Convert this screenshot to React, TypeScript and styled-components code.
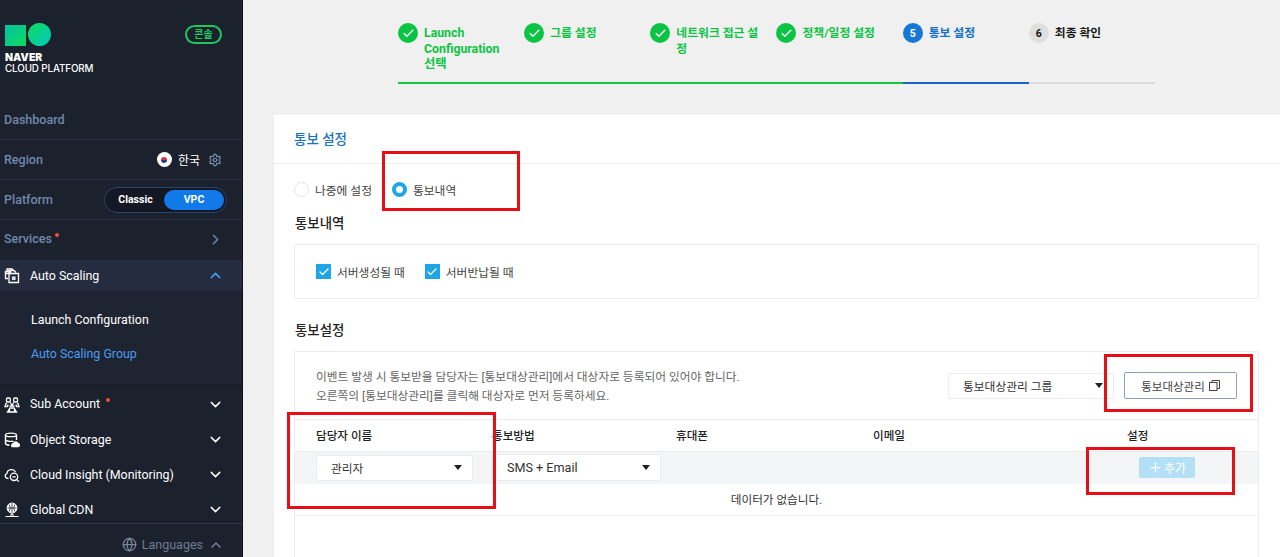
import React from "react";
import styled, { createGlobalStyle } from "styled-components";
import { Check, ChevronDown, ChevronRight, ChevronUp, Globe, Plus, Settings } from "lucide-react";

const Global = createGlobalStyle`
  html, body { margin: 0; padding: 0; height: 557px; overflow: hidden; }
  body { font-family: Roboto, "Noto Sans CJK KR", sans-serif; background: #f0f0f0; }
  * { box-sizing: border-box; }
`;

const Page = styled.div`
  display: flex;
  height: 557px;
  position: relative;
  overflow: hidden;
`;

/* sidebar */
const Side = styled.aside`
  width: 243px;
  flex: none;
  background: #1c212e;
  border-right: 1px solid #0e1118;
  display: flex;
  flex-direction: column;
`;
const LogoArea = styled.div`
  height: 100px;
  padding: 23px 20px 0 5px;
  display: flex;
  justify-content: space-between;
  align-items: flex-start;
`;
const LogoMark = styled.div`
  display: flex;
  align-items: flex-end;
  gap: 2px;
`;
const LogoSquare = styled.div`
  width: 21px;
  height: 21px;
  background: linear-gradient(135deg, #00c3a5, #10d95c);
`;
const LogoCircle = styled.div`
  width: 23px;
  height: 23px;
  border-radius: 50%;
  background: linear-gradient(135deg, #10d95c, #00c8c0);
`;
const LogoText = styled.div`
  margin-top: 6px;
  color: #fff;
  font-family: Inter, sans-serif;
  font-size: 9.8px;
  line-height: 11px;
  font-weight: 500;
  letter-spacing: -0.1px;
  b { font-weight: 900; display: block; font-size: 10.4px; letter-spacing: 0.1px; }
`;
const Badge = styled.div`
  width: 37px;
  height: 19px;
  margin: 2px 0 0;
  border: 2px solid #1fc75c;
  border-radius: 10px;
  color: #1fd060;
  font-size: 10px;
  font-weight: 700;
  line-height: 15px;
  text-align: center;
`;
const TopRow = styled.div<{ $last?: boolean }>`
  height: ${(p) => (p.$last ? "39px" : "40px")};
  padding: 0 20px 0 4px;
  display: flex;
  align-items: center;
  justify-content: space-between;
  color: #7189ab;
  font-size: 12.5px;
  font-weight: 500;
  border-bottom: ${(p) => (p.$last ? "none" : "1px solid #2a3242")};
  > svg { margin-right: -2px; }
`;
const RegionValue = styled.div`
  display: flex;
  align-items: center;
  gap: 6px;
  color: #fff;
  font-size: 12px;
  font-weight: 400;
  svg { margin-left: 2px; color: #7f94b0; }
`;
const Flag = styled.span`
  width: 15px;
  height: 15px;
  border-radius: 50%;
  background: #fff;
  display: flex;
  align-items: center;
  justify-content: center;
  &::after {
    content: "";
    width: 6px;
    height: 6px;
    border-radius: 50%;
    background: linear-gradient(180deg, #d8344a 50%, #24408e 50%);
  }
`;
const PlatformSwitch = styled.div`
  width: 123px;
  height: 26px;
  margin-right: -5px;
  padding: 2px;
  border: 1px solid #2b4468;
  border-radius: 13px;
  background: #141824;
  display: flex;
  align-items: center;
`;
const PlatformOption = styled.span<{ $on?: boolean }>`
  flex: ${(p) => (p.$on ? "0 0 60px" : "1")};
  height: 20px;
  border-radius: 10px;
  background: ${(p) => (p.$on ? "#117ae8" : "transparent")};
  color: #fff;
  font-size: 10.5px;
  font-weight: 700;
  line-height: 20px;
  text-align: center;
`;
const Dot = styled.i<{ $gap: number }>`
  display: inline-block;
  width: 4px;
  height: 4px;
  margin: 0 0 11px ${(p) => p.$gap}px;
  border-radius: 50%;
  background: #f0503c;
  vertical-align: middle;
`;
const ActiveRow = styled.div`
  height: 31px;
  margin-top: 1px;
  padding: 0 18px 0 4px;
  background: #262c3f;
  display: flex;
  align-items: center;
  justify-content: space-between;
  color: #fff;
  font-size: 12.4px;
`;
const MenuLabel = styled.span`
  display: flex;
  align-items: center;
  gap: 10px;
  svg { flex: none; }
`;
const SubPanel = styled.div`
  height: 94px;
  padding: 13px 0 0 31px;
  background: #1f2432;
  border-bottom: 1px solid #1a1e29;
`;
const SubItem = styled.div<{ $on?: boolean }>`
  height: 34px;
  line-height: 32px;
  color: ${(p) => (p.$on ? "#4a9df0" : "#fff")};
  font-size: 12.4px;
`;
const MenuList = styled.div`
  padding-top: 2px;
  height: 139px;
  border-bottom: 1px solid #333a49;
`;
const MenuRow = styled.div`
  height: 35px;
  padding: 0 18px 0 4px;
  display: flex;
  align-items: center;
  justify-content: space-between;
  color: #fff;
  font-size: 12.4px;
`;
const LangRow = styled.div`
  flex: 1;
  padding: 8px 18px 0 0;
  display: flex;
  align-items: center;
  justify-content: flex-end;
  gap: 5px;
  color: #6e7d92;
  font-size: 12.5px;
  svg { color: #7a8698; }
`;

/* main */
const Main = styled.main`
  flex: 1;
  min-width: 0;
  padding-left: 31px;
`;
const Steps = styled.div`
  width: 757px;
  height: 84px;
  margin-left: 124px;
  padding-top: 23px;
  display: grid;
  grid-template-columns: repeat(6, 1fr);
  position: relative;
`;
const StepTrack = styled.div<{ $state: string }>`
  position: relative;
  display: flex;
  gap: 6px;
  padding-right: 16px;
  height: 61px;
  border-bottom: 2px solid ${(p) => (p.$state === "done" ? "#12c73a" : p.$state === "now" ? "#1566c9" : "#dcdcdc")};
`;
const StepDot = styled.div<{ $state: string }>`
  width: 20px;
  height: 20px;
  flex: none;
  border-radius: 50%;
  background: ${(p) => (p.$state === "done" ? "#0cc443" : p.$state === "now" ? "#1678d4" : "#dedede")};
  color: ${(p) => (p.$state === "todo" ? "#111" : "#fff")};
  font-size: 10.5px;
  font-weight: 700;
  display: flex;
  align-items: center;
  justify-content: center;
`;
const StepText = styled.div<{ $state: string; $latin?: boolean }>`
  font-size: ${(p) => (p.$latin ? "12.3px" : "11.8px")};
  font-weight: 700;
  line-height: 15.5px;
  padding-top: 3px;
  color: ${(p) => (p.$state === "done" ? "#0cc443" : p.$state === "now" ? "#1672c4" : "#1a1a1a")};
`;
const Card = styled.section`
  margin-top: 31px;
  background: #fff;
  height: 500px;
`;
const CardHead = styled.h2`
  margin: 0;
  height: 49px;
  padding-left: 20px;
  border-bottom: 1px solid #eeeeee;
  color: #1672c4;
  font-size: 13.5px;
  font-weight: 500;
  line-height: 49px;
`;
const CardBody = styled.div`
  padding: 0 21px 0 20px;
`;
const RadioRow = styled.div`
  height: 50px;
  display: flex;
  align-items: center;
  gap: 20px;
`;
const RadioItem = styled.label`
  display: flex;
  align-items: center;
  gap: 6px;
  color: #444;
  font-size: 11.75px;
`;
const RadioMark = styled.span<{ $on?: boolean }>`
  width: 15px;
  height: 15px;
  border-radius: 50%;
  background: #fff;
  border: ${(p) => (p.$on ? "4px solid #1ea5e6" : "1px solid #e3e3e3")};
`;
const SectionTitle = styled.h3`
  margin: 0;
  height: 30px;
  padding-left: 1px;
  color: #222;
  font-size: 13.4px;
  font-weight: 500;
  line-height: 19px;
`;
const Box = styled.div`
  border: 1px solid #ececec;
  border-radius: 2px;
`;
const CheckBox = styled(Box)`
  height: 55px;
  padding: 0 21px;
  display: flex;
  align-items: center;
  gap: 20px;
  margin-bottom: 22px;
`;
const CheckItem = styled.label`
  display: flex;
  align-items: center;
  gap: 6px;
  color: #444;
  font-size: 11.75px;
`;
const CheckMark = styled.span`
  width: 15px;
  height: 15px;
  background: #1ea5e6;
  color: #fff;
  display: flex;
  align-items: center;
  justify-content: center;
`;
const NoticeBox = styled(Box)`
  height: 300px;
`;
const NoticeTop = styled.div`
  height: 68px;
  padding: 0 21px;
  display: flex;
  align-items: center;
  justify-content: space-between;
  border-bottom: 1px solid #ececec;
`;
const NoticeText = styled.p`
  margin: 0;
  padding-top: 2px;
  color: #666;
  font-size: 11.72px;
  line-height: 19px;
`;
const NoticeActions = styled.div`
  display: flex;
  align-items: center;
  gap: 10px;
`;
const Select = styled.div<{ $w: number; $h: number; $latin?: boolean }>`
  width: ${(p) => p.$w}px;
  height: ${(p) => p.$h}px;
  padding: 0 10px 0 14px;
  background: #fff;
  border: 1px solid #ececec;
  border-radius: 2px;
  display: flex;
  align-items: center;
  justify-content: space-between;
  color: #333;
  font-size: ${(p) => (p.$latin ? "12.6px" : "11.75px")};
  &::after {
    content: "";
    border-left: 4px solid transparent;
    border-right: 4px solid transparent;
    border-top: 5px solid #222;
  }
`;
const ManageButton = styled.button`
  width: 113px;
  height: 27px;
  padding: 0;
  background: #fff;
  border: 1px solid #8ea2bd;
  border-radius: 2px;
  color: #444;
  font: inherit;
  font-size: 11.5px;
  display: flex;
  align-items: center;
  justify-content: center;
  gap: 4px;
`;
const Cols = styled.div`
  display: grid;
  grid-template-columns: 176px 184px 197px 254px 1fr;
  padding-left: 21px;
`;
const HeadRow = styled(Cols)`
  height: 32px;
  padding-bottom: 2px;
  align-items: center;
  border-bottom: 1px solid #ececec;
  color: #222;
  font-size: 11.6px;
  font-weight: 500;
`;
const BodyRow = styled(Cols)`
  height: 32px;
  padding-bottom: 1px;
  align-items: center;
  background: #f4f5f7;
`;
const AddButton = styled.button`
  width: 56px;
  height: 21px;
  padding: 0;
  margin-left: 12px;
  background: #b3e0f5;
  border: none;
  border-radius: 2px;
  color: #fff;
  font: inherit;
  font-size: 12px;
  display: flex;
  align-items: center;
  justify-content: center;
  gap: 1px;
`;
const Empty = styled.div`
  height: 32px;
  border-bottom: 1px solid #f2f2f2;
  color: #333;
  font-size: 11.6px;
  line-height: 32px;
  text-align: center;
`;

/* red marks drawn over the screenshot */
const Mark = styled.div<{ $x: number; $y: number; $w: number; $h: number }>`
  position: absolute;
  left: ${(p) => p.$x}px;
  top: ${(p) => p.$y}px;
  width: ${(p) => p.$w}px;
  height: ${(p) => p.$h}px;
  border: 3px solid #e60f18;
  pointer-events: none;
`;

const CubeIcon = () => (
  <svg width="16" height="16" viewBox="0 0 16 16" fill="none" stroke="#fff" strokeWidth="1.3">
    <path d="M3 3.500V1h5l1.500 1.500" />
    <path d="M5 5V2.500h5l2 2" />
    <path d="M1.500 3.500h5v2h-5z" />
    <path d="M1.500 3.500v7H4M6.500 5.500H14.500V14.500H5V5.500z" />
    <path d="M7.500 8h4.500v4.500H7.500z" fill="#d8e4f5" stroke="#1c212e" strokeWidth=".8" />
  </svg>
);
const PeopleIcon = () => (
  <svg width="16" height="16" viewBox="0 0 16 16" fill="none" stroke="#fff" strokeWidth="1.300">
    <rect x="2.500" y="1" width="3.800" height="4" rx="1" />
    <rect x="9.700" y="1" width="3.800" height="4" rx="1" />
    <path d="M6.300 5.500L8 8.500l1.700-3" />
    <path d="M2.500 5.500L1 9.500h2.500L4 7.500" />
    <path d="M13.500 5.500L15 9.500h-2.500L12 7.500" />
    <path d="M5.500 9h5M3.500 15L6 11h4l2.500 4zM5.500 15V12M10.500 15V12" />
  </svg>
);
const StorageIcon = () => (
  <svg width="16" height="16" viewBox="0 0 16 16" fill="none" stroke="#fff" strokeWidth="1.400">
    <path d="M1.500 3c0-2.500 11-2.500 11 0v5M1.500 3v8.500c0 1 1.500 1.500 4 1.800M1.500 3c0 2.200 11 2.200 11 0M1.500 7.500c0 1.800 5 2.200 8 1.700" />
    <path d="M8 14.500h6c1.800 0 1.800-3-.3-3-.5-2-3.500-2-4 0-2 0-2.200 3-1.700 3z" fill="#fff" />
  </svg>
);
const InsightIcon = () => (
  <svg width="16" height="16" viewBox="0 0 16 16" fill="none" stroke="#fff" strokeWidth="1.300">
    <path d="M4.500 11.500C1 11.500 0 7.500 3 6.300 3.500 2 10 1.500 11.500 5" />
    <circle cx="10" cy="9.800" r="3.700" />
    <path d="M8.300 9.800h3.400M12.800 12.600l2 2" />
  </svg>
);
const CdnIcon = () => (
  <svg width="16" height="16" viewBox="0 0 16 16" fill="none" stroke="#fff" strokeWidth="1.200">
    <circle cx="8" cy="6" r="4.800" fill="#fff" />
    <path d="M3.500 6h9M8 1.200v9.600M5 2.500c1.500 2 1.500 5 0 7M11 2.500c-1.500 2-1.500 5 0 7" stroke="#1c212e" strokeWidth=".8" />
    <path d="M8 11v2M1.500 14.500h13M6 13h4" />
  </svg>
);
const CopyIcon = () => (
  <svg width="11" height="11" viewBox="0 0 11 11" fill="none" stroke="#444" strokeWidth="1">
    <rect x="0.500" y="2.500" width="7.500" height="8" />
    <path d="M3 2.500V.500h7.500v8H8" />
  </svg>
);

const steps = [
  { label: "Launch Configuration 선택", state: "done", latin: true },
  { label: "그룹 설정", state: "done" },
  { label: "네트워크 접근 설정", state: "done" },
  { label: "정책/일정 설정", state: "done" },
  { label: "통보 설정", state: "now" },
  { label: "최종 확인", state: "todo" },
];

const menus = [
  { label: "Sub Account", icon: <PeopleIcon />, dot: true },
  { label: "Object Storage", icon: <StorageIcon /> },
  { label: "Cloud Insight (Monitoring)", icon: <InsightIcon /> },
  { label: "Global CDN", icon: <CdnIcon /> },
];

const App: React.FC = () => {
  return (
    <Page>
      <Global />
      <Side>
        <LogoArea>
          <div>
            <LogoMark>
              <LogoSquare />
              <LogoCircle />
            </LogoMark>
            <LogoText>
              <b>NAVER</b>
              CLOUD PLATFORM
            </LogoText>
          </div>
          <Badge>콘솔</Badge>
        </LogoArea>
        <TopRow>Dashboard</TopRow>
        <TopRow>
          Region
          <RegionValue>
            <Flag />
            한국
            <Settings size={14} />
          </RegionValue>
        </TopRow>
        <TopRow>
          Platform
          <PlatformSwitch>
            <PlatformOption>Classic</PlatformOption>
            <PlatformOption $on>VPC</PlatformOption>
          </PlatformSwitch>
        </TopRow>
        <TopRow $last>
          <span>
            Services
            <Dot $gap={3} />
          </span>
          <ChevronRight size={17} />
        </TopRow>
        <ActiveRow>
          <MenuLabel>
            <CubeIcon />
            Auto Scaling
          </MenuLabel>
          <ChevronUp size={17} color="#4a9df0" />
        </ActiveRow>
        <SubPanel>
          <SubItem>Launch Configuration</SubItem>
          <SubItem $on>Auto Scaling Group</SubItem>
        </SubPanel>
        <MenuList>
          {menus.map((m) => (
            <MenuRow key={m.label}>
              <MenuLabel>
                {m.icon}
                <span>
                  {m.label}
                  {m.dot && <Dot $gap={6} />}
                </span>
              </MenuLabel>
              <ChevronDown size={17} />
            </MenuRow>
          ))}
        </MenuList>
        <LangRow>
          <Globe size={15} />
          Languages
          <ChevronUp size={16} />
        </LangRow>
      </Side>
      <Main>
        <Steps>
          {steps.map((s, i) => (
            <StepTrack key={s.label} $state={s.state}>
              <StepDot $state={s.state}>
                {s.state === "done" ? <Check size={13} strokeWidth={2.5} /> : i + 1}
              </StepDot>
              <StepText $state={s.state} $latin={s.latin}>
                {s.label}
              </StepText>
            </StepTrack>
          ))}
        </Steps>
        <Card>
          <CardHead>통보 설정</CardHead>
          <CardBody>
            <RadioRow>
              <RadioItem>
                <RadioMark />
                나중에 설정
              </RadioItem>
              <RadioItem>
                <RadioMark $on />
                통보내역
              </RadioItem>
            </RadioRow>
            <SectionTitle>통보내역</SectionTitle>
            <CheckBox>
              <CheckItem>
                <CheckMark>
                  <Check size={12} strokeWidth={2.5} />
                </CheckMark>
                서버생성될 때
              </CheckItem>
              <CheckItem>
                <CheckMark>
                  <Check size={12} strokeWidth={2.5} />
                </CheckMark>
                서버반납될 때
              </CheckItem>
            </CheckBox>
            <SectionTitle>통보설정</SectionTitle>
            <NoticeBox>
              <NoticeTop>
                <NoticeText>
                  이벤트 발생 시 통보받을 담당자는 [통보대상관리]에서 대상자로 등록되어 있어야 합니다.
                  <br />
                  오른쪽의 [통보대상관리]를 클릭해 대상자로 먼저 등록하세요.
                </NoticeText>
                <NoticeActions>
                  <Select $w={166} $h={26}>
                    통보대상관리 그룹
                  </Select>
                  <ManageButton>
                    통보대상관리
                    <CopyIcon />
                  </ManageButton>
                </NoticeActions>
              </NoticeTop>
              <HeadRow>
                <span>담당자 이름</span>
                <span>통보방법</span>
                <span>휴대폰</span>
                <span>이메일</span>
                <span>설정</span>
              </HeadRow>
              <BodyRow>
                <Select $w={157} $h={26}>
                  관리자
                </Select>
                <Select $w={169} $h={27} $latin>
                  SMS + Email
                </Select>
                <span />
                <span />
                <AddButton>
                  <Plus size={15} strokeWidth={2} />
                  추가
                </AddButton>
              </BodyRow>
              <Empty>데이터가 없습니다.</Empty>
            </NoticeBox>
          </CardBody>
        </Card>
      </Main>
      <Mark $x={382} $y={151} $w={138} $h={60} />
      <Mark $x={287} $y={412} $w={209} $h={97} />
      <Mark $x={1104} $y={354} $w={149} $h={58} />
      <Mark $x={1086} $y={447} $w={149} $h={48} />
    </Page>
  );
};

export default App;
